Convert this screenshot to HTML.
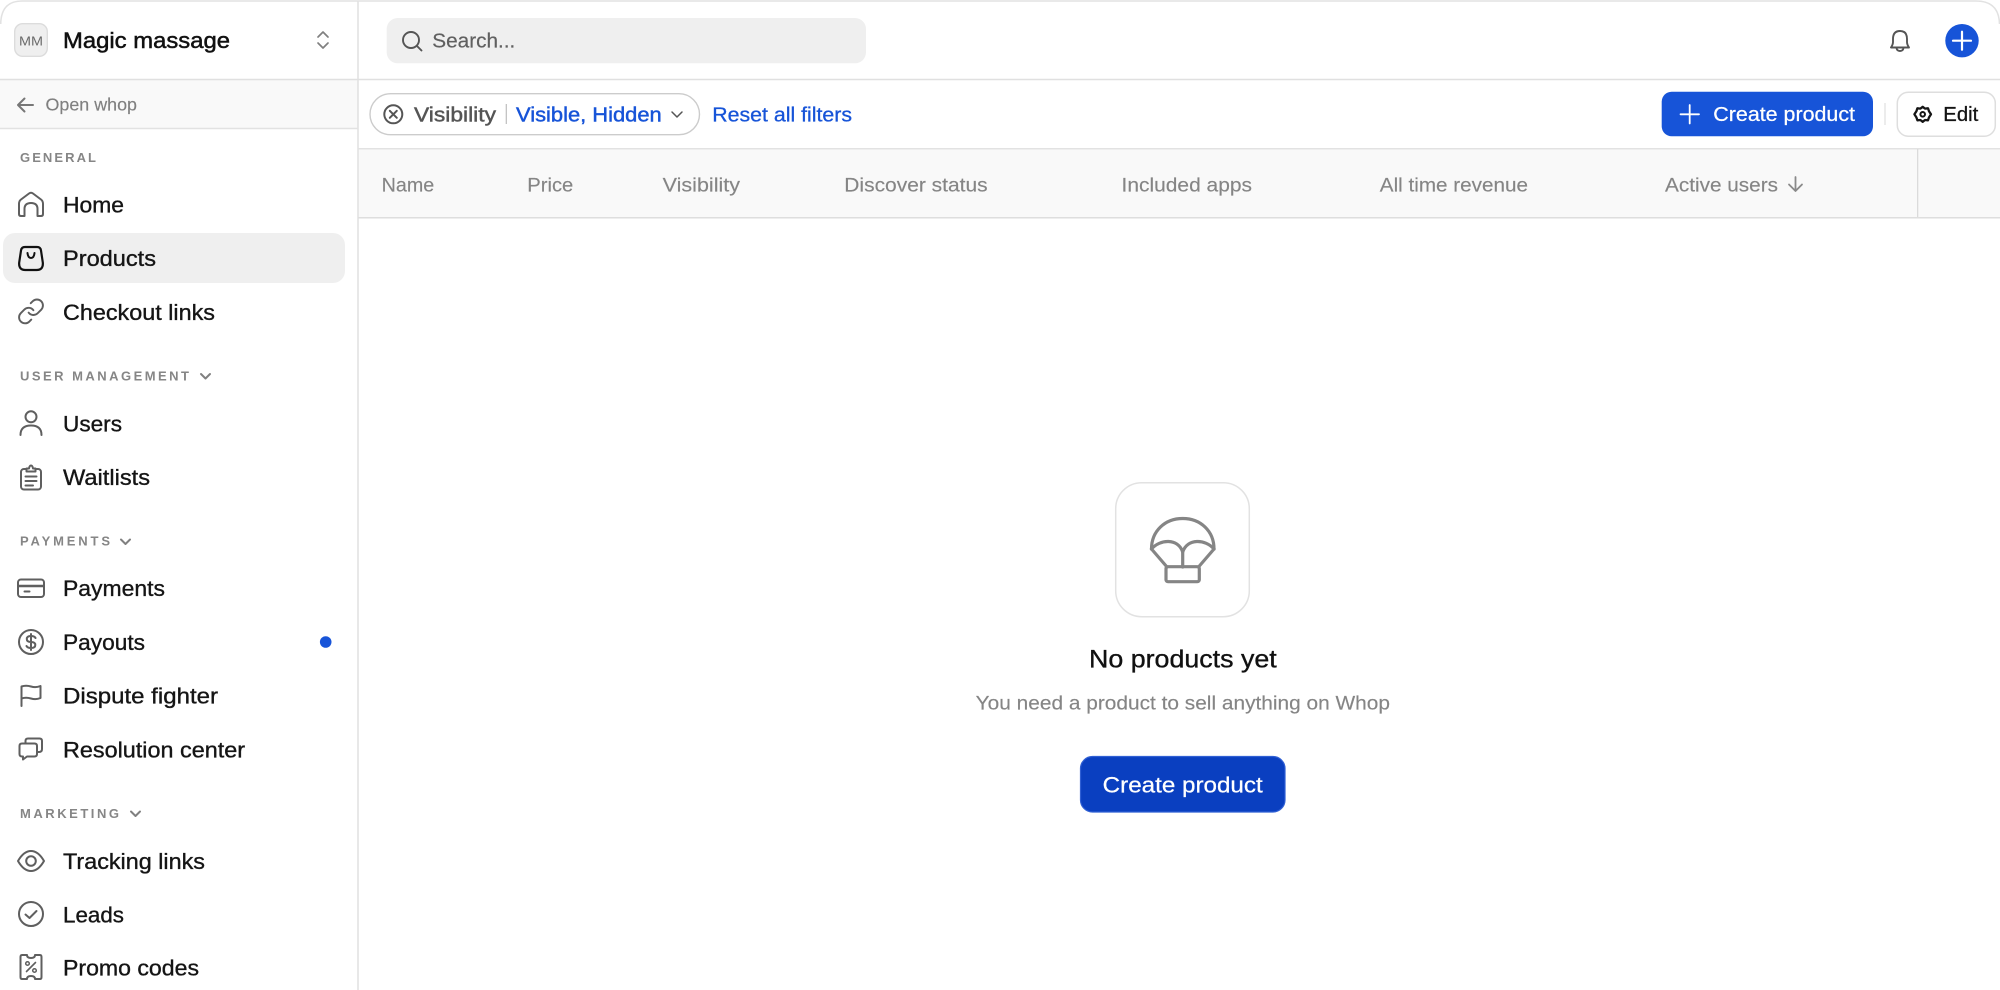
<!DOCTYPE html>
<html lang="en">
<head>
<meta charset="utf-8">
<title>Products</title>
<style>
html,body{margin:0;padding:0;background:#fff;width:2000px;height:990px;overflow:hidden}
svg{display:block;filter:blur(.35px)}
text{font-family:"Liberation Sans",Arial,sans-serif}
.nav{font-size:22px;fill:#151515}
.nm{stroke:#151515;stroke-width:.35}
.sec{font-size:13px;font-weight:700;fill:#868686}
.th{font-size:19.5px;fill:#858585;stroke:#858585;stroke-width:.15}
.ic{fill:none;stroke:#5f5f5f;stroke-width:2;stroke-linecap:round;stroke-linejoin:round}
.chev{fill:none;stroke:#808080;stroke-width:2;stroke-linecap:round;stroke-linejoin:round}
</style>
</head>
<body>
<svg width="2000" height="990" viewBox="0 0 2000 990" xmlns="http://www.w3.org/2000/svg">
<rect width="2000" height="990" fill="#fff"/>

<!-- frames -->
<rect x="0" y="80" width="358" height="49" fill="#f9f9f9"/>
<rect x="358" y="149" width="1642" height="69" fill="#f9f9f9"/>
<path d="M0.7 24 Q1 1 22 1 H1976 Q1999 1 1999.5 24" fill="none" stroke="#e2e2e2" stroke-width="1.6"/>
<path d="M358 1V990" stroke="#e2e2e2" stroke-width="1.6"/>
<path d="M0 79.5H2000" stroke="#e0e0e0" stroke-width="1.5"/>
<path d="M0 128.5H358" stroke="#e2e2e2" stroke-width="1.5"/>
<path d="M358 148.7H2000" stroke="#e2e2e2" stroke-width="1.5"/>
<path d="M358 217.8H2000" stroke="#dedede" stroke-width="1.5"/>
<path d="M1917.7 149V217" stroke="#d8d8d8" stroke-width="1.2"/>

<!-- workspace header -->
<rect x="14.7" y="23.7" width="32.6" height="32.6" rx="8" fill="#efefef" stroke="#dcdcdc" stroke-width="1.4"/>
<text x="19" y="45.5" font-size="13" fill="#6a6a6a" textLength="24" lengthAdjust="spacingAndGlyphs">MM</text>
<text x="63" y="48" font-size="22" fill="#111" stroke="#111" stroke-width=".5" textLength="167" lengthAdjust="spacingAndGlyphs">Magic massage</text>
<path d="M318 37L323 32L328 37M318 43L323 48L328 43" class="chev" style="stroke-width:1.7"/>

<!-- open whop -->
<path d="M33 105H18M24.5 98.5L18 105L24.5 111.5" class="chev" style="stroke:#777"/>
<text x="45.5" y="110.7" font-size="17.5" fill="#808080" stroke="#808080" stroke-width=".15" textLength="91.5" lengthAdjust="spacingAndGlyphs">Open whop</text>

<!-- section labels -->
<text x="20" y="162" class="sec" textLength="76" lengthAdjust="spacing">GENERAL</text>
<text x="20" y="380.7" class="sec" textLength="169" lengthAdjust="spacing">USER MANAGEMENT</text>
<path d="M201 374L205.5 378.5L210 374" class="chev"/>
<text x="20" y="545.7" class="sec" textLength="90" lengthAdjust="spacing">PAYMENTS</text>
<path d="M121 539.5L125.5 544L130 539.5" class="chev"/>
<text x="20" y="818" class="sec" textLength="99" lengthAdjust="spacing">MARKETING</text>
<path d="M131 811.5L135.5 816L140 811.5" class="chev"/>

<!-- selected row -->
<rect x="3" y="233" width="342" height="50" rx="12" fill="#efefef"/>

<!-- nav labels -->
<text x="63" y="212.7" class="nav nm" textLength="61" lengthAdjust="spacingAndGlyphs">Home</text>
<text x="63" y="266" class="nav nm" textLength="93" lengthAdjust="spacingAndGlyphs">Products</text>
<text x="63" y="320" class="nav nm" textLength="152" lengthAdjust="spacingAndGlyphs">Checkout links</text>
<text x="63" y="431.3" class="nav nm" textLength="59" lengthAdjust="spacingAndGlyphs">Users</text>
<text x="63" y="485" class="nav nm" textLength="87" lengthAdjust="spacingAndGlyphs">Waitlists</text>
<text x="63" y="596" class="nav nm" textLength="102" lengthAdjust="spacingAndGlyphs">Payments</text>
<text x="63" y="650" class="nav nm" textLength="82" lengthAdjust="spacingAndGlyphs">Payouts</text>
<text x="63" y="703.3" class="nav nm" textLength="155" lengthAdjust="spacingAndGlyphs">Dispute fighter</text>
<text x="63" y="757.3" class="nav nm" textLength="182" lengthAdjust="spacingAndGlyphs">Resolution center</text>
<text x="63" y="869" class="nav nm" textLength="142" lengthAdjust="spacingAndGlyphs">Tracking links</text>
<text x="63" y="922.3" class="nav nm" textLength="61" lengthAdjust="spacingAndGlyphs">Leads</text>
<text x="63" y="975.7" class="nav nm" textLength="136" lengthAdjust="spacingAndGlyphs">Promo codes</text>

<!-- nav icons -->
<path class="ic" d="M19 204Q19 201 21 199.5L29 193.5Q31 192 33 193.5L41 199.5Q43 201 43 204V214Q43 216 41 216H37.5V209Q37.5 203 31 203Q24.5 203 24.5 209V216H21Q19 216 19 214Z"/>
<path class="ic" style="stroke:#111;stroke-width:2.2" d="M25 247H37Q40.5 247 41 250.500L42.800 262.500Q43.500 270 36.500 270H25.500Q18.500 270 19.200 262.500L21 250.500Q21.500 247 25 247Z"/>
<path class="ic" style="stroke:#111;stroke-width:2" d="M27.500 253Q28 258 31 258Q34 258 34.500 253"/>
<g transform="translate(16.6 297) scale(1.2)"><path class="ic" style="stroke-width:1.6" d="M10 13a5 5 0 0 0 7.540.54l3-3a5 5 0 0 0-7.070-7.070l-1.720 1.710M14 11a5 5 0 0 0-7.540-.54l-3 3a5 5 0 0 0 7.070 7.070l1.710-1.710"/></g>
<circle class="ic" cx="31" cy="416.8" r="5.500"/>
<path class="ic" d="M20.500 435Q20.500 425.500 31 425.500Q41.500 425.500 41.500 435"/>
<rect class="ic" x="21" y="469" width="20" height="20.500" rx="3"/>
<path class="ic" d="M26.500 471.500V468.500H29Q29.500 465.500 31 465.500Q32.500 465.500 33 468.500H35.500V471.500Z" style="fill:#fff"/>
<path class="ic" d="M25.500 476.500H36.500M25.500 481H36.500M25.500 485.500H33"/>
<rect class="ic" x="18" y="579.500" width="26" height="17.500" rx="3"/>
<path class="ic" style="stroke-width:2.6;stroke-linecap:butt" d="M18 586H44"/>
<path class="ic" d="M24.500 591.500H29.500"/>
<circle class="ic" cx="31" cy="642" r="12"/>
<path class="ic" d="M35.500 638Q34.500 636 31 636Q26.800 636 26.800 639Q26.800 642 31 642Q35.300 642 35.300 645Q35.300 648 31 648Q27.500 648 26.500 646M31 634V650"/>
<path class="ic" d="M21.500 706V686.500Q26 685 31 686.500Q36 688 40.500 686V698Q36 700 31 698.500Q26 697 21.500 698.500"/>
<path class="ic" d="M25.500 743V741Q25.500 738.500 28 738.500H39.500Q42 738.500 42 741V749Q42 752 39 752H37"/>
<path class="ic" d="M22 743.500H34.500Q37 743.500 37 746V754Q37 756.500 34.500 756.500H27L23 759.500V756.500H22Q19.500 756.500 19.500 754V746Q19.500 743.500 22 743.500Z"/>
<path class="ic" d="M18 861C22 854 26 851 31 851C36 851 40 854 44 861C40 868 36 871 31 871C26 871 22 868 18 861Z"/>
<circle class="ic" cx="31" cy="861" r="4.800"/>
<circle class="ic" cx="31" cy="914" r="12"/>
<path class="ic" d="M25.500 914.500L29.500 918L36.500 911"/>
<path class="ic" d="M22 955H27Q27 958 31 958Q35 958 35 955H40Q41.500 955 41.500 957V977Q41.500 979 40 979H35Q35 976 31 976Q27 976 27 979H22Q20.500 979 20.500 977V957Q20.500 955 22 955Z"/>
<path class="ic" style="stroke-width:1.600" d="M35.500 962.500L26.500 971.500"/>
<circle class="ic" style="stroke-width:1.500" cx="27.500" cy="963.500" r="1.800"/>
<circle class="ic" style="stroke-width:1.500" cx="34.500" cy="970.500" r="1.800"/>
<circle cx="325.700" cy="642" r="5.800" fill="#1754d8"/>

<!-- search -->
<rect x="386.700" y="18" width="479.300" height="45.300" rx="11" fill="#efefef"/>
<circle cx="411" cy="40" r="8" fill="none" stroke="#555" stroke-width="1.900"/>
<path d="M417 46L421.500 50.500" stroke="#555" stroke-width="1.900" stroke-linecap="round"/>
<text x="432.300" y="47.500" font-size="20" fill="#606060" stroke="#606060" stroke-width=".2" textLength="83" lengthAdjust="spacingAndGlyphs">Search...</text>

<!-- top right -->
<path d="M1900 31Q1893 31 1893 39V42Q1893 44.500 1891 47.500H1909Q1907 44.500 1907 42V39Q1907 31 1900 31ZM1896.500 48Q1897 51 1900 51Q1903 51 1903.500 48" fill="none" stroke="#555" stroke-width="1.900" stroke-linejoin="round"/>
<circle cx="1962" cy="40.700" r="16.700" fill="#1754d8"/>
<path d="M1953 40.700H1971M1962 31.700V49.700" stroke="#fff" stroke-width="2.200" stroke-linecap="round"/>

<!-- filter bar -->
<rect x="370" y="93.700" width="329.500" height="41" rx="20.500" fill="#fff" stroke="#cccccc" stroke-width="1.400"/>
<circle cx="393.300" cy="114.300" r="9" fill="none" stroke="#555" stroke-width="2"/>
<path d="M389.800 110.800L396.800 117.800M396.800 110.800L389.800 117.800" stroke="#555" stroke-width="2" stroke-linecap="round"/>
<text x="414" y="121.700" font-size="20" fill="#555" stroke="#555" stroke-width=".45" textLength="82" lengthAdjust="spacingAndGlyphs">Visibility</text>
<path d="M506.300 104V124" stroke="#bdbdbd" stroke-width="1.200"/>
<text x="516" y="121.700" font-size="20" fill="#1754d8" stroke="#1754d8" stroke-width=".45" textLength="145.700" lengthAdjust="spacingAndGlyphs">Visible, Hidden</text>
<path d="M672 112L677 117L682 112" fill="none" stroke="#555" stroke-width="1.500" stroke-linecap="round" stroke-linejoin="round"/>
<text x="712.300" y="121.700" font-size="20" fill="#1754d8" stroke="#1754d8" stroke-width=".3" textLength="139.700" lengthAdjust="spacingAndGlyphs">Reset all filters</text>

<!-- create button -->
<rect x="1661.700" y="91.700" width="211.300" height="44.600" rx="10" fill="#1754d8"/>
<path d="M1680.500 114.300H1699M1689.700 105V123.500" stroke="#fff" stroke-width="1.800" stroke-linecap="round"/>
<text x="1713.300" y="121" font-size="20" fill="#fff" stroke="#fff" stroke-width=".25" textLength="141.700" lengthAdjust="spacingAndGlyphs">Create product</text>
<path d="M1885 103V125" stroke="#e5e5e5" stroke-width="1.500"/>

<!-- edit button -->
<rect x="1897.300" y="92.200" width="98" height="44" rx="11" fill="#fff" stroke="#dedede" stroke-width="1.500"/>
<path d="M1922.700 106.800L1925 108.600L1928 108.300L1929 111.200L1931 114.300L1929 117.400L1928 120.300L1925 120L1922.700 121.800L1920.400 120L1917.400 120.300L1916.400 117.400L1914.400 114.300L1916.400 111.200L1917.400 108.300L1920.400 108.600Z" fill="none" stroke="#151515" stroke-width="2.300" stroke-linejoin="round"/>
<circle cx="1922.700" cy="114.300" r="2.300" fill="none" stroke="#151515" stroke-width="2"/>
<text x="1943.300" y="121" font-size="20" fill="#151515" stroke="#151515" stroke-width=".3" textLength="35" lengthAdjust="spacingAndGlyphs">Edit</text>

<!-- table header -->
<text x="381.700" y="191.700" class="th" textLength="52.600" lengthAdjust="spacingAndGlyphs">Name</text>
<text x="527.300" y="191.700" class="th" textLength="46" lengthAdjust="spacingAndGlyphs">Price</text>
<text x="662.700" y="191.700" class="th" textLength="77.300" lengthAdjust="spacingAndGlyphs">Visibility</text>
<text x="844.300" y="191.700" class="th" textLength="143.300" lengthAdjust="spacingAndGlyphs">Discover status</text>
<text x="1121.500" y="191.700" class="th" textLength="130.500" lengthAdjust="spacingAndGlyphs">Included apps</text>
<text x="1379.800" y="191.700" class="th" textLength="148.200" lengthAdjust="spacingAndGlyphs">All time revenue</text>
<text x="1665" y="191.700" class="th" textLength="113" lengthAdjust="spacingAndGlyphs">Active users</text>
<path d="M1795.500 177V191M1789 184.500L1795.500 191L1802 184.500" fill="none" stroke="#8a8a8a" stroke-width="1.800" stroke-linecap="round" stroke-linejoin="round"/>

<!-- empty state -->
<rect x="1115.700" y="482.700" width="133.600" height="134" rx="26" fill="#fff" stroke="#e2e2e2" stroke-width="1.500"/>
<g fill="none" stroke="#858585" stroke-width="3.200" stroke-linejoin="round" stroke-linecap="round">
<path d="M1151.500 549C1151.500 531 1165 518.500 1182.700 518.500C1200.500 518.500 1214 531 1214 549"/>
<path d="M1151.500 549C1160 539 1178 538 1182.700 552C1187.500 538 1205.500 539 1214 549"/>
<path d="M1151.500 549L1167 567M1214 549L1198.500 567M1182.700 552V567"/>
<rect x="1166" y="566.700" width="33.300" height="15" rx="2"/>
</g>
<text x="1089" y="667.300" font-size="25" fill="#111" stroke="#111" stroke-width=".35" textLength="187.700" lengthAdjust="spacingAndGlyphs">No products yet</text>
<text x="975.700" y="709.300" font-size="19.500" fill="#858585" stroke="#858585" stroke-width=".15" textLength="414.300" lengthAdjust="spacingAndGlyphs">You need a product to sell anything on Whop</text>
<rect x="1080.500" y="756.500" width="204.500" height="55.500" rx="12" fill="#0a3fc0" stroke="#2f5fd4" stroke-width="1.200"/>
<text x="1102.700" y="792.700" font-size="22" fill="#fff" stroke="#fff" stroke-width=".25" textLength="160" lengthAdjust="spacingAndGlyphs">Create product</text>
</svg>
</body>
</html>
